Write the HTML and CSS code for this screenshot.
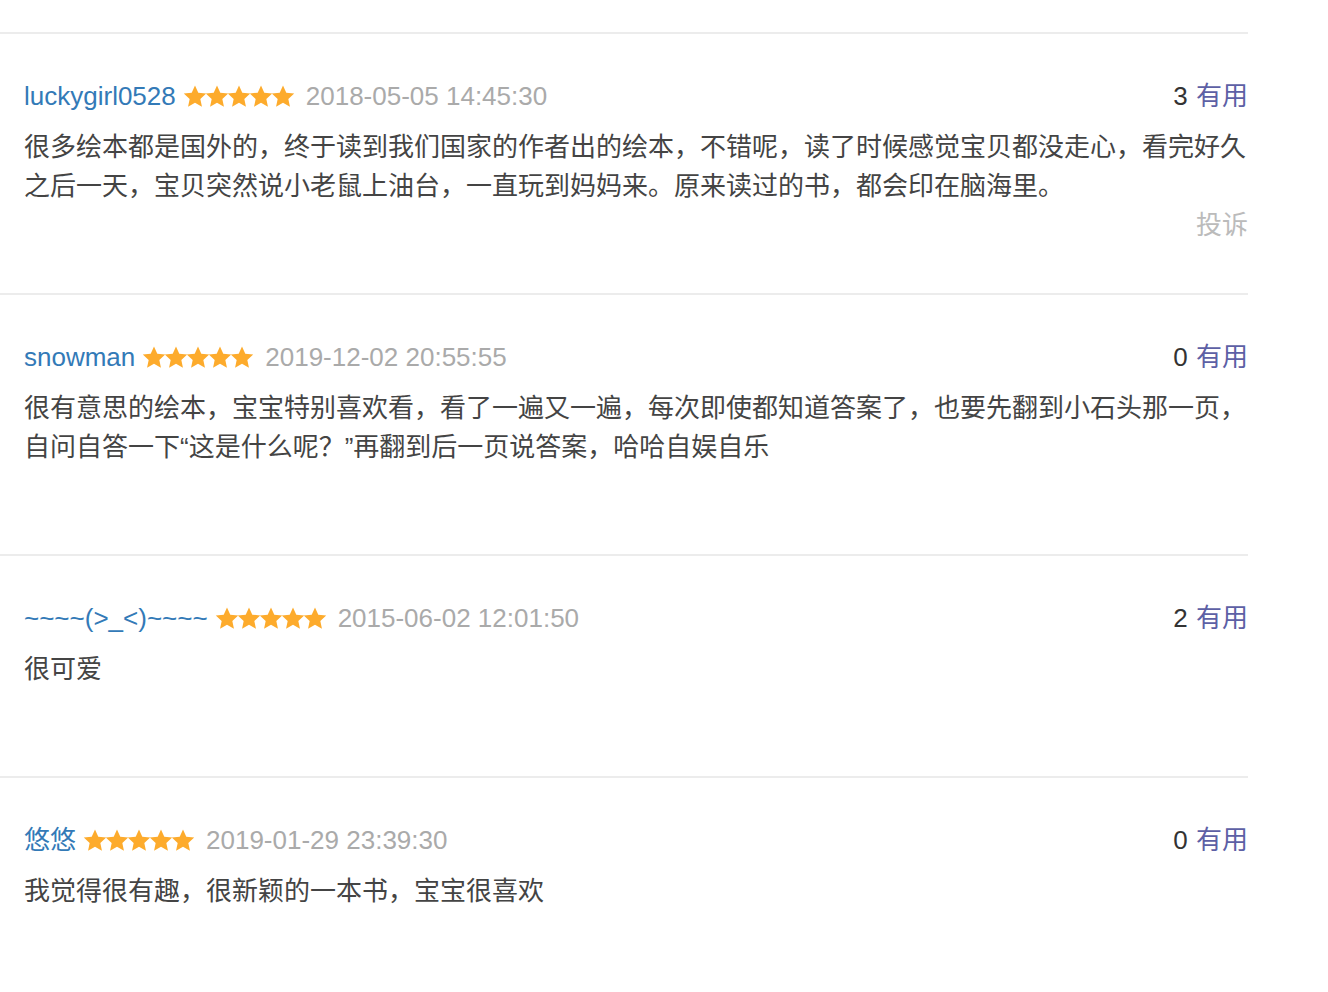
FILE: index.html
```html
<!DOCTYPE html>
<html lang="zh-CN">
<head>
<meta charset="utf-8">
<title>评论</title>
<link rel="stylesheet" href="styles.css">
</head>
<body>
<svg class="defs" width="0" height="0" aria-hidden="true">
  <defs>
    <symbol id="star" viewBox="0 0 22 22" overflow="visible">
      <polygon points="11,0.4 14.29,7.67 22.2,8.55 16.33,13.93 17.94,21.75 11,17.8 4.06,21.75 5.67,13.93 -0.2,8.55 7.71,7.67" />
    </symbol>
  </defs>
</svg>
<div class="list">
  <div class="review">
    <div class="head">
      <div class="meta">
        <a class="name">luckygirl0528</a>
        <svg class="stars" width="110" height="22" viewBox="0 0 110 22"><use href="#star" x="0" width="22" height="22"/><use href="#star" x="22" width="22" height="22"/><use href="#star" x="44" width="22" height="22"/><use href="#star" x="66" width="22" height="22"/><use href="#star" x="88" width="22" height="22"/></svg>
        <span class="date">2018-05-05 14:45:30</span>
      </div>
      <div class="useful"><span class="count">3</span> <a class="useful-link">有用</a></div>
    </div>
    <p class="body">很多绘本都是国外的，终于读到我们国家的作者出的绘本，不错呢，读了时候感觉宝贝都没走心，看完好久之后一天，宝贝突然说小老鼠上油台，一直玩到妈妈来。原来读过的书，都会印在脑海里。</p>
    <div class="actions"><a class="report">投诉</a></div>
  </div>
  <div class="review">
    <div class="head">
      <div class="meta">
        <a class="name">snowman</a>
        <svg class="stars" width="110" height="22" viewBox="0 0 110 22"><use href="#star" x="0" width="22" height="22"/><use href="#star" x="22" width="22" height="22"/><use href="#star" x="44" width="22" height="22"/><use href="#star" x="66" width="22" height="22"/><use href="#star" x="88" width="22" height="22"/></svg>
        <span class="date">2019-12-02 20:55:55</span>
      </div>
      <div class="useful"><span class="count">0</span> <a class="useful-link">有用</a></div>
    </div>
    <p class="body">很有意思的绘本，宝宝特别喜欢看，看了一遍又一遍，每次即使都知道答案了，也要先翻到小石头那一页，自问自答一下“这是什么呢？”再翻到后一页说答案，哈哈自娱自乐</p>
    <div class="actions"><a class="report hidden">投诉</a></div>
  </div>
  <div class="review">
    <div class="head">
      <div class="meta">
        <a class="name">~~~~(&gt;_&lt;)~~~~</a>
        <svg class="stars" width="110" height="22" viewBox="0 0 110 22"><use href="#star" x="0" width="22" height="22"/><use href="#star" x="22" width="22" height="22"/><use href="#star" x="44" width="22" height="22"/><use href="#star" x="66" width="22" height="22"/><use href="#star" x="88" width="22" height="22"/></svg>
        <span class="date">2015-06-02 12:01:50</span>
      </div>
      <div class="useful"><span class="count">2</span> <a class="useful-link">有用</a></div>
    </div>
    <p class="body">很可爱</p>
    <div class="actions"><a class="report hidden">投诉</a></div>
  </div>
  <div class="review">
    <div class="head">
      <div class="meta">
        <a class="name">悠悠</a>
        <svg class="stars" width="110" height="22" viewBox="0 0 110 22"><use href="#star" x="0" width="22" height="22"/><use href="#star" x="22" width="22" height="22"/><use href="#star" x="44" width="22" height="22"/><use href="#star" x="66" width="22" height="22"/><use href="#star" x="88" width="22" height="22"/></svg>
        <span class="date">2019-01-29 23:39:30</span>
      </div>
      <div class="useful"><span class="count">0</span> <a class="useful-link">有用</a></div>
    </div>
    <p class="body">我觉得很有趣，很新颖的一本书，宝宝很喜欢</p>
    <div class="actions"><a class="report hidden">投诉</a></div>
  </div>
</div>
</body>
</html>
```

FILE: styles.css
```css
html, body {
  margin: 0;
  padding: 0;
  background: #fff;
}
body {
  font-family: "Liberation Sans", "Noto Sans CJK SC", sans-serif;
  font-size: 26px;
  line-height: 39px;
  color: #444;
}
.defs {
  position: absolute;
  width: 0;
  height: 0;
  overflow: hidden;
}
.list {
  width: 1248px;
  padding-top: 32px;
}
.review {
  border-top: 2px solid #ececec;
  padding: 43px 0 48px 24px;
}
.head {
  display: flex;
  justify-content: space-between;
  align-items: center;
  height: 39px;
  margin-bottom: 12px;
}
.meta {
  display: flex;
  align-items: center;
  white-space: nowrap;
}
.name {
  color: #337ab7;
  text-decoration: none;
}
.stars {
  fill: #fdab2c;
  margin-left: 8px;
  margin-top: -2px;
  overflow: visible;
}
.date {
  color: #aaa;
  margin-left: 12px;
}
.useful {
  white-space: nowrap;
  color: #333;
}
.useful-link {
  color: #5d60a5;
  margin-left: 1px;
}
.body {
  margin: 0;
  color: #444;
}
.actions {
  display: flex;
  justify-content: flex-end;
  height: 39px;
}
.report {
  color: #bbb;
}
.report.hidden {
  visibility: hidden;
}
```
